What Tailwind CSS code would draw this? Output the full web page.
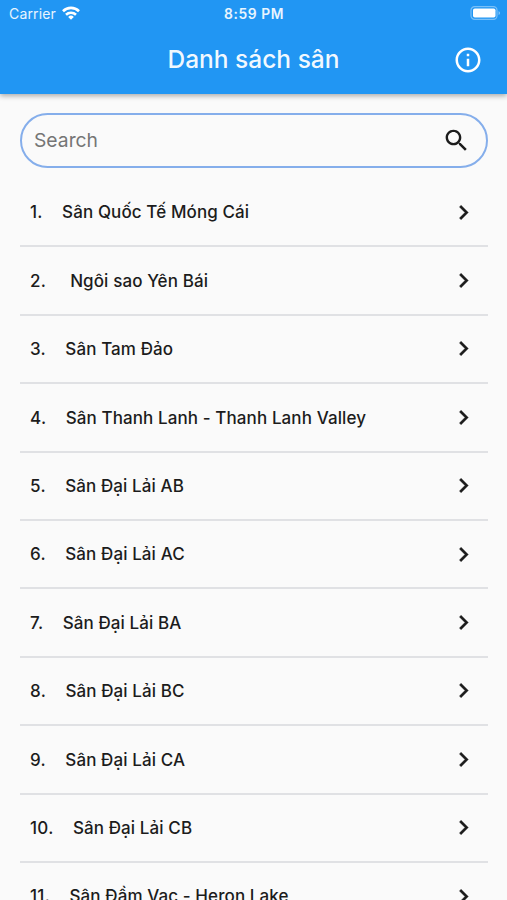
<!DOCTYPE html>
<html lang="vi">
<head>
    <meta charset="utf-8">
    <title>Danh sách sân</title>

    <!--  Styles  -->
    <script src="https://cdn.jsdelivr.net/npm/@tailwindcss/browser@4"></script>
</head>

<body class="bg-[#fafafa] font-['Inter',sans-serif] text-[#1c1c1c]">
    <div class="flex flex-col h-[900px] overflow-hidden">
        <!-- Header -->
        <header class="shrink-0 h-[94px] bg-[#2196f3] text-white shadow-[0_2px_5px_rgba(0,0,0,0.32)]">
            <div class="grid grid-cols-3 items-center h-[27px] pl-[9px] pr-[6px]">
                <div class="flex items-center gap-[6px]">
                    <span class="text-[14px] tracking-[0.15px] text-white/90">Carrier</span>
                    <svg class="w-[18px] h-[14px] -mt-px" viewBox="0 0 18 14" fill="none" stroke="currentColor" stroke-width="2.6">
                        <path d="M1 5.2a11.4 11.4 0 0 1 16 0" />
                        <path d="M4 8.7a7.2 7.2 0 0 1 10 0" />
                        <path d="M9 13.7 6.2 10.9a4 4 0 0 1 5.6 0Z" fill="currentColor" stroke="none" />
                    </svg>
                </div>
                <span class="-ml-[2px] pt-px text-center text-[13.8px] font-semibold tracking-[0.6px] text-white/90">8:59 PM</span>
                <svg class="justify-self-end w-[31px] h-[14px] -mt-px" viewBox="0 0 31 14">
                    <rect x="1" y="0.7" width="26" height="12.6" rx="3.6" fill="none" stroke="#fff" stroke-opacity="0.4" stroke-width="1.2" />
                    <rect x="3" y="2.4" width="22.5" height="9.2" rx="1.8" fill="#fff" />
                    <path d="M28.6 4.9c1.8.8 1.8 3.4 0 4.2Z" fill="#fff" fill-opacity="0.5" />
                </svg>
            </div>
            <div class="grid grid-cols-[1fr_auto_1fr] items-center h-[65px] px-[24px]">
                <h1 class="col-start-2 text-[24.5px] font-medium text-white/95">Danh sách sân</h1>
                <svg class="justify-self-end w-[30px] h-[30px]" viewBox="0 0 24 24" fill="currentColor">
                    <path d="M11 7h2v2h-2zm0 4h2v6h-2zm1-9C6.48 2 2 6.48 2 12s4.48 10 10 10 10-4.48 10-10S17.52 2 12 2zm0 18c-4.41 0-8-3.59-8-8s3.59-8 8-8 8 3.59 8 8-3.59 8-8 8z" />
                </svg>
            </div>
        </header>

        <main class="pl-[20px] pr-[19px] pt-[19px]">
            <!-- Search -->
            <div class="flex items-center justify-between h-[55px] pl-[12px] pr-[15px] rounded-full border-2 border-[#85aeeb]">
                <input type="text" id="search-bar" class="w-72 text-[19.3px] outline-none placeholder:text-[#757575]" placeholder="Search">
                <svg class="w-[29px] h-[29px]" viewBox="0 0 24 24" fill="currentColor">
                    <path d="M15.5 14h-.79l-.28-.27C15.41 12.59 16 11.11 16 9.5 16 5.91 13.09 3 9.5 3S3 5.91 3 9.5 5.91 16 9.5 16c1.61 0 3.09-.59 4.23-1.57l.27.28v.79l5 4.99L20.49 19l-4.99-5zm-6 0C7.01 14 5 11.99 5 9.5S7.01 5 9.5 5 14 7.01 14 9.5 11.99 14 9.5 14z" />
                </svg>
            </div>

            <!-- List -->
            <ul id="course-list" class="mt-[11px]"></ul>
        </main>
    </div>

<script type="text/javascript">
    var courses = [
        "Sân Quốc Tế Móng Cái",
        " Ngôi sao Yên Bái",
        "Sân Tam Đảo",
        "Sân Thanh Lanh - Thanh Lanh Valley",
        "Sân Đại Lải AB",
        "Sân Đại Lải AC",
        "Sân Đại Lải BA",
        "Sân Đại Lải BC",
        "Sân Đại Lải CA",
        "Sân Đại Lải CB",
        "Sân Đầm Vạc - Heron Lake"
    ];

    var list = document.getElementById("course-list");

    courses.forEach(function (name, i) {
        var row = document.createElement("li");
        row.className = "flex items-center h-[68.4px] px-[10px] border-b-2 border-[#e0e1e4] text-[17px] font-medium tracking-[0.1px] whitespace-pre";
        row.innerHTML =
            '<span class="mr-[19.3px] pt-[2px] tracking-[0.3px]">' + (i + 1) + '.</span>' +
            '<span class="grow pt-[2px]">' + name + '</span>' +
            '<svg class="w-[29px] h-[29px]" viewBox="0 0 24 24" fill="currentColor" stroke="currentColor" stroke-width="0.3">' +
            '<path d="M10 6 8.59 7.41 13.17 12l-4.58 4.59L10 18l6-6z" /></svg>';
        list.appendChild(row);
    });
</script>
</body>
</html>
